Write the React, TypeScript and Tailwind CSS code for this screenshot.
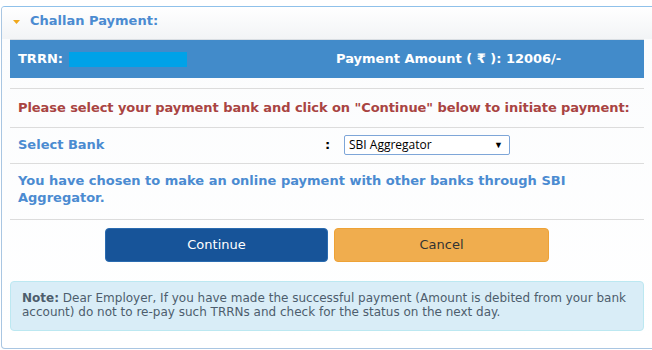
export default function App() {
  return (
    <div className="w-[652px] h-[350px] bg-white overflow-hidden pt-[6px] pl-[1px]" style={{ fontFamily: '"DejaVu Sans", Verdana, sans-serif' }}>
      <div className="w-[670px] h-[343px] border border-[#a9c6e2] border-t-[#8fc1ea] rounded-[4px] overflow-hidden bg-white">
        <div className="h-[32px] flex items-center bg-gradient-to-b from-white to-[#f2f4f6] pl-[11px] pb-[4px]">
          <svg width="7" height="4" viewBox="0 0 7 4" className="mt-[1px]">
            <polygon points="0,0 7,0 3.5,4" fill="#f0a81c" />
          </svg>
          <span className="ml-[10px] text-[13px] font-bold text-[#4b8bd1]">Challan Payment:</span>
        </div>
        <div className="w-[650px] px-[8px] pb-[8px] bg-gradient-to-b from-[#fbfcfd] to-white">
          <div className="border-t border-[#d9dee3] h-[39px] bg-[#428bca] flex items-center text-white text-[13px] font-bold">
            <div className="w-[326px] pl-[8px] flex items-center">
              <span>TRRN:</span>
              <span className="ml-[6px] w-[118px] h-[15px] bg-[#00a2e8]" />
            </div>
            <span>Payment Amount ( ₹ ): 12006/-</span>
          </div>
          <div className="mt-[10px] border-t border-[#dcdcdc] h-[39px] flex items-center pl-[8px] text-[13px] font-bold tracking-[-0.07px] text-[#a94442]">
            Please select your payment bank and click on "Continue" below to initiate payment:
          </div>
          <div className="border-t border-[#dcdcdc] h-[36px] flex items-center pl-[8px] pb-[1px] text-[13px] font-bold text-[#4b8bd1]">
            <span className="w-[307px]">Select Bank</span>
            <span className="text-black w-[19px]">:</span>
            <div className="w-[166px] h-[20px] border border-[#7ea6d8] rounded-[2px] flex items-center justify-between pl-[4px] pr-[6px] bg-white" style={{ fontFamily: '"Open Sans", sans-serif' }}>
              <span className="text-[12px] font-normal text-black">SBI Aggregator</span>
              <span className="text-[9px] font-normal text-black">▼</span>
            </div>
          </div>
          <div className="border-t border-[#dcdcdc] h-[56px] pl-[8px] pt-[8px] text-[13px] font-bold leading-[17px] text-[#4b8bd1]">
            You have chosen to make an online payment with other banks through SBI Aggregator.
          </div>
          <div className="border-t border-[#dcdcdc] pt-[8px] flex justify-center gap-[6px]">
            <button className="w-[223px] h-[34px] rounded-[4px] bg-[#175499] border border-[#2a6bb0] text-white text-[13px]">Continue</button>
            <button className="w-[215px] h-[34px] rounded-[4px] bg-[#f0ad4e] border border-[#eea236] text-[#333] text-[13px]">Cancel</button>
          </div>
          <div className="mt-[19px] h-[50px] rounded-[4px] bg-[#d9edf7] border border-[#bce8f1] pl-[11px] pt-[9px] text-[12px] leading-[14px] text-[#4d5d6d]">
            <b>Note:</b> Dear Employer, If you have made the successful payment (Amount is debited from your bank account) do not to re-pay such TRRNs and check for the status on the next day.
          </div>
        </div>
      </div>
    </div>
  );
}
